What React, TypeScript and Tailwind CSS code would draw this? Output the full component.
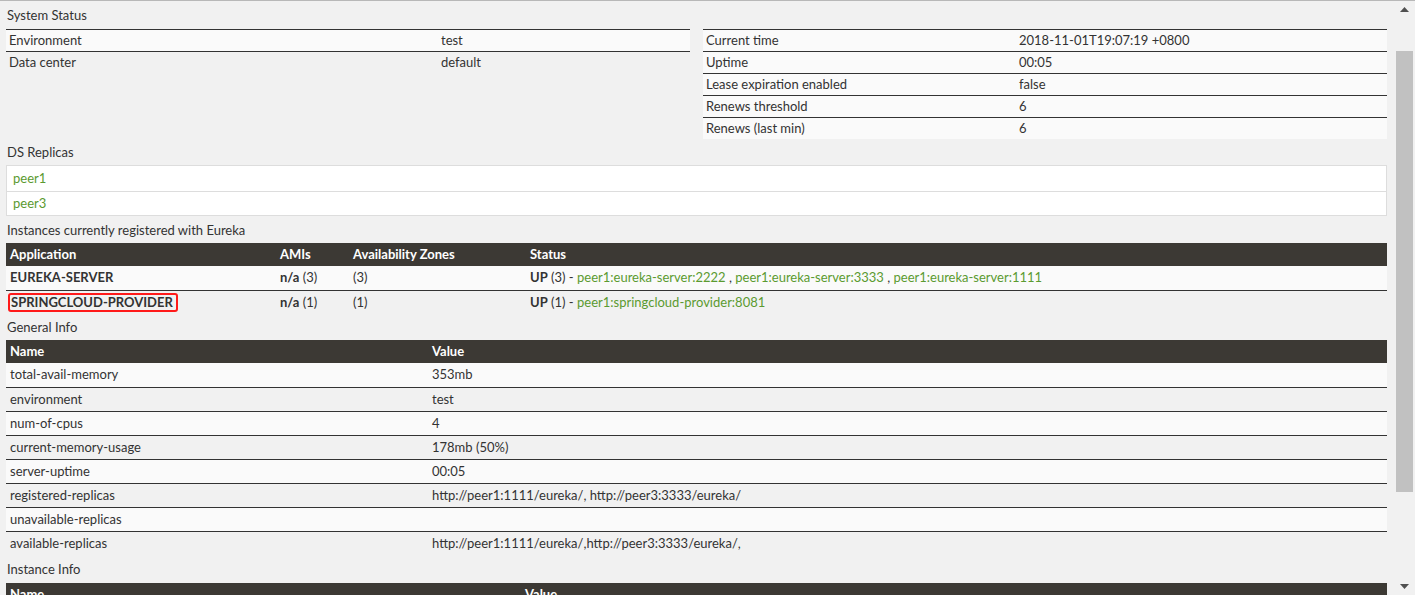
import React from "react";

const FONT = { fontFamily: "Lato, 'Open Sans', sans-serif" };

const green = "text-[#5b9a30]";

function Heading({ children, h }: { children: React.ReactNode; h: string }) {
  return (
    <div className={`flex items-center ${h} pl-[1px] pt-[2px] text-[13px] text-[#333]`}>{children}</div>
  );
}

const generalInfo: [string, string][] = [
  ["total-avail-memory", "353mb"],
  ["environment", "test"],
  ["num-of-cpus", "4"],
  ["current-memory-usage", "178mb (50%)"],
  ["server-uptime", "00:05"],
  ["registered-replicas", "http://peer1:1111/eureka/, http://peer3:3333/eureka/"],
  ["unavailable-replicas", ""],
  ["available-replicas", "http://peer1:1111/eureka/,http://peer3:3333/eureka/,"],
];

const rightStatus: [string, string][] = [
  ["Current time", "2018-11-01T19:07:19 +0800"],
  ["Uptime", "00:05"],
  ["Lease expiration enabled", "false"],
  ["Renews threshold", "6"],
  ["Renews (last min)", "6"],
];

export default function App() {
  return (
    <div
      className="flex h-[595px] w-[1415px] overflow-hidden border-t border-[#b8b8b8] bg-[#f1f1f1] text-[13px] text-[#333]"
      style={FONT}
    >
      <div className="w-[1396px] shrink-0 pl-[6px] pr-[9px]">
        <Heading h="h-[28px]">System Status</Heading>
        <div className="grid grid-cols-2 items-start gap-[13px]">
          <div className="flex flex-col">
            <div className="flex h-[22px] items-center border-t border-[#333] bg-[#fafafa] pl-[3px]">
              <div className="w-[432px]">Environment</div>
              <div>test</div>
            </div>
            <div className="flex h-[22px] items-center border-t border-[#333] pl-[3px]">
              <div className="w-[432px]">Data center</div>
              <div>default</div>
            </div>
          </div>
          <div className="flex flex-col">
            {rightStatus.map(([k, v]) => (
              <div key={k} className="flex h-[22px] items-center border-t border-[#333] bg-[#fafafa] pl-[3px]">
                <div className="w-[313px]">{k}</div>
                <div>{v}</div>
              </div>
            ))}
          </div>
        </div>

        <Heading h="h-[26px]">DS Replicas</Heading>
        <div className="border border-[#dddddd] bg-white">
          <div className={`flex h-[25px] items-center pl-[6px] ${green}`}>peer1</div>
          <div className={`flex h-[24px] items-center border-t border-[#dddddd] pl-[6px] ${green}`}>peer3</div>
        </div>

        <Heading h="h-[27px]">Instances currently registered with Eureka</Heading>
        <div>
          <div className="flex h-[23px] items-center bg-[#3c3934] pl-[4px] font-bold text-white">
            <div className="w-[270px]">Application</div>
            <div className="w-[73px]">AMIs</div>
            <div className="w-[177px]">Availability Zones</div>
            <div>Status</div>
          </div>
          <div className="flex h-[24px] items-center bg-[#fafafa] pl-[4px]">
            <div className="w-[270px] font-bold">EUREKA-SERVER</div>
            <div className="w-[73px]">
              <b>n/a</b> (3)
            </div>
            <div className="w-[177px]">(3)</div>
            <div>
              <b>UP</b> (3) - <span className={green}>peer1:eureka-server:2222</span> ,{" "}
              <span className={green}>peer1:eureka-server:3333</span> ,{" "}
              <span className={green}>peer1:eureka-server:1111</span>
            </div>
          </div>
          <div className="flex h-[24px] items-center border-t border-[#333] pl-[2px]">
            <div className="w-[272px]">
              <span className="inline-block rounded-[3px] border-2 border-[#ff1a1a] pl-[1px] pr-[3px] font-bold leading-[15px]">
                SPRINGCLOUD-PROVIDER
              </span>
            </div>
            <div className="w-[73px]">
              <b>n/a</b> (1)
            </div>
            <div className="w-[177px]">(1)</div>
            <div>
              <b>UP</b> (1) - <span className={green}>peer1:springcloud-provider:8081</span>
            </div>
          </div>
        </div>

        <Heading h="h-[26px]">General Info</Heading>
        <div>
          <div className="flex h-[23px] items-center bg-[#3c3934] pl-[4px] font-bold text-white">
            <div className="w-[422px]">Name</div>
            <div>Value</div>
          </div>
          {generalInfo.map(([k, v], i) => (
            <div
              key={k}
              className={`flex h-[24px] items-center pl-[4px] ${i % 2 === 0 ? "bg-[#fafafa]" : ""} ${
                i > 0 ? "border-t border-[#333]" : ""
              }`}
            >
              <div className="w-[422px]">{k}</div>
              <div>{v}</div>
            </div>
          ))}
        </div>

        <Heading h="h-[28px]">Instance Info</Heading>
        <div className="flex h-[23px] items-center bg-[#3c3934] pl-[4px] font-bold text-white">
          <div className="w-[515px]">Name</div>
          <div>Value</div>
        </div>
      </div>

      <div className="flex w-[19px] shrink-0 flex-col pr-[2px]">
        <div className="flex h-[17px] shrink-0 items-center justify-center">
          <svg width="9" height="5" viewBox="0 0 9 5">
            <polygon points="4.5,0 9,5 0,5" fill="#505050" />
          </svg>
        </div>
        <div className="h-[33px] shrink-0" />
        <div className="h-[441px] shrink-0 bg-[#c1c1c1]" />
        <div className="flex-1" />
        <div className="flex h-[17px] shrink-0 items-center justify-center">
          <svg width="9" height="5" viewBox="0 0 9 5">
            <polygon points="0,0 9,0 4.5,5" fill="#505050" />
          </svg>
        </div>
      </div>
    </div>
  );
}
